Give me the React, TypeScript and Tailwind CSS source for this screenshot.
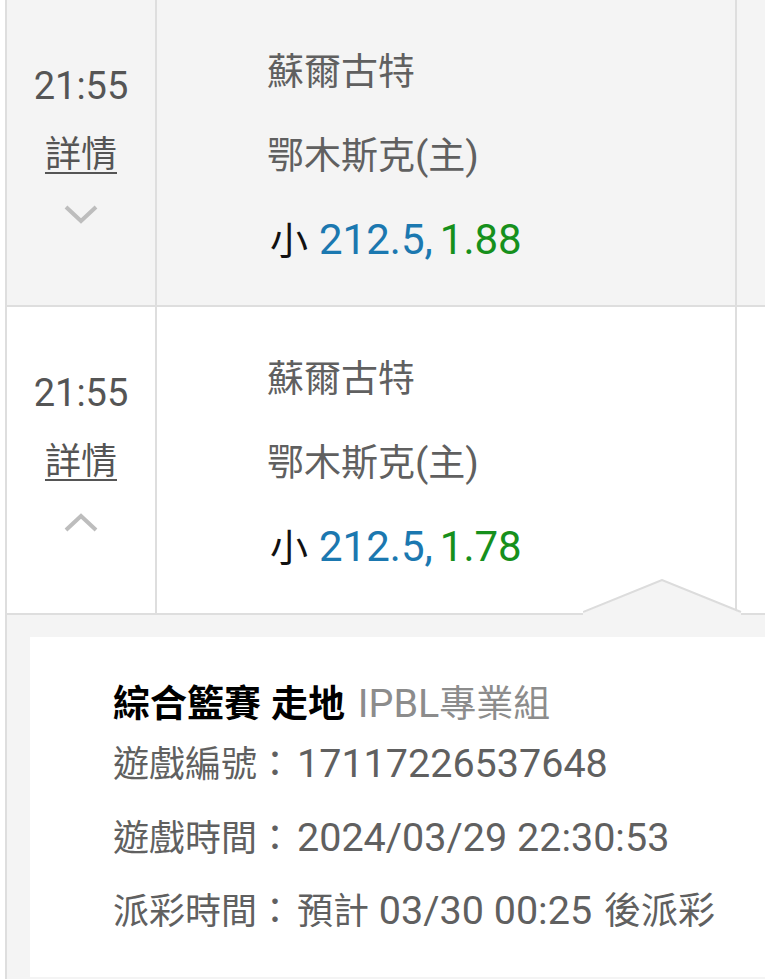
import React from "react";

const FONT = 'Roboto, "Noto Sans CJK TC", "Noto Sans", sans-serif';

function Chevron({ up }: { up?: boolean }) {
  return (
    <svg width="34" height="20" viewBox="0 0 34 20" className="block">
      <polyline
        points={up ? "2,18 17,4 32,18" : "2,2 17,16 32,2"}
        fill="none"
        stroke="#bdbdbd"
        strokeWidth="4"
      />
    </svg>
  );
}

function Row({ odds, up, white }: { odds: string; up?: boolean; white?: boolean }) {
  return (
    <div
      className={`relative flex border-b-2 border-[#dedede] ${
        white ? "bg-white h-[308px]" : "bg-[#f4f4f4] h-[307px]"
      }`}
    >
      <div className="w-[150px] shrink-0 border-r-2 border-[#dedede] flex flex-col items-center pt-[64px]">
        <div className="text-[38px] leading-[44px] text-[#555]">21:55</div>
        <div className="mt-[25px] text-[36px] leading-[44px] text-[#555] underline decoration-2 underline-offset-[5px]">
          詳情
        </div>
        <div className="mt-[28px]">
          <Chevron up={up} />
        </div>
      </div>
      <div className="w-[580px] shrink-0 border-r-2 border-[#dedede] pl-[110px] pt-[51px] flex flex-col gap-[39px]">
        <div className="text-[37px] leading-[44px] text-[#606060]">蘇爾古特</div>
        <div className="text-[37px] leading-[44px] text-[#606060]">
          鄂木斯克<span className="text-[39px]">(</span>主<span className="text-[39px]">)</span>
        </div>
        <div className="flex items-baseline leading-[44px] pl-[3px]">
          <span className="text-[38px] text-[#111]">小</span>
          <span className="ml-[11px] text-[42px] text-[#1b78b0]">212.5,</span>
          <span className="ml-[7px] text-[42px] text-[#16901c]">{odds}</span>
        </div>
      </div>
      <div className="flex-1" />
      {up && (
        <svg
          className="absolute bottom-[-2px] left-[576px]"
          width="160"
          height="36"
          viewBox="0 0 160 36"
        >
          <polygon points="0,34 79,1 158,34 158,36 0,36" fill="#f4f4f4" />
          <polyline points="0,33 79,1 158,33" fill="none" stroke="#dcdcdc" strokeWidth="2" />
        </svg>
      )}
    </div>
  );
}

export default function App() {
  return (
    <div className="w-[765px] h-[979px] overflow-hidden bg-white" style={{ fontFamily: FONT }}>
      <div className="ml-[5px] w-[900px] h-full border-l-2 border-[#dedede] flex flex-col">
        <Row odds="1.88" />
        <Row odds="1.78" up white />
        <div className="flex-1 bg-[#f4f4f4] pl-[23px] pt-[22px]">
          <div className="bg-white h-[340px] pl-[83px] pt-[45px] text-[36px] leading-[44px] text-[#606060]">
            <div className="whitespace-nowrap">
              <span className="font-bold text-black text-[37px]">
                綜合籃賽<span className="text-[40px]"> </span>走地
              </span>
              <span className="ml-[3px] text-[#8c8c8c]">
                <span className="text-[39.5px]"> IPBL</span>
                <span className="text-[37px]">專業組</span>
              </span>
            </div>
            <div className="mt-[15px] whitespace-nowrap">
              遊戲編號：<span className="ml-[4px] text-[39.5px]">17117226537648</span>
            </div>
            <div className="mt-[29px] whitespace-nowrap">
              遊戲時間：<span className="ml-[4px] text-[39.5px]">2024/03/29 22:30:53</span>
            </div>
            <div className="mt-[28px] whitespace-nowrap">
              派彩時間：<span className="ml-[4px]">預計</span>
              <span className="text-[39.5px]"> 03/30 00:25 </span>
              <span className="ml-[2px] text-[37px]">後派彩</span>
            </div>
          </div>
        </div>
      </div>
    </div>
  );
}
